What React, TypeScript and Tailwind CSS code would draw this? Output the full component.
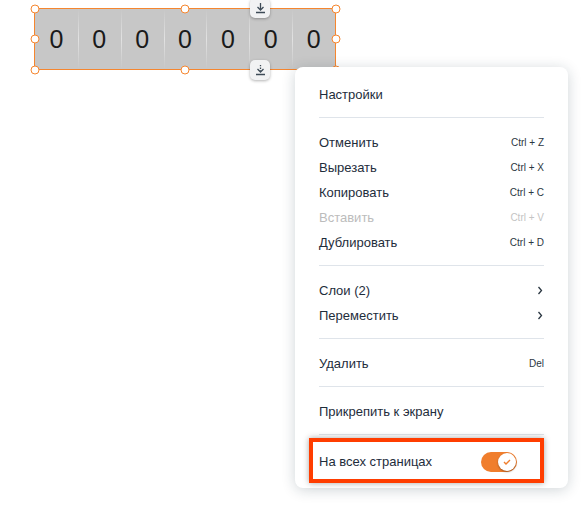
import type { ReactNode } from 'react';

type Item = {
  label: string;
  shortcut?: string;
  disabled?: boolean;
  submenu?: boolean;
};

const SECTIONS: Item[][] = [
  [{ label: 'Настройки' }],
  [
    { label: 'Отменить', shortcut: 'Ctrl + Z' },
    { label: 'Вырезать', shortcut: 'Ctrl + X' },
    { label: 'Копировать', shortcut: 'Ctrl + C' },
    { label: 'Вставить', shortcut: 'Ctrl + V', disabled: true },
    { label: 'Дублировать', shortcut: 'Ctrl + D' },
  ],
  [
    { label: 'Слои (2)', submenu: true },
    { label: 'Переместить', submenu: true },
  ],
  [{ label: 'Удалить', shortcut: 'Del' }],
  [{ label: 'Прикрепить к экрану' }],
];

// handle centers on the selection frame (page coords)
const HANDLES: [number, number][] = [
  [34, 8],
  [184, 8],
  [335, 8],
  [34, 38],
  [335, 38],
  [34, 69],
  [184, 69],
  [335, 69],
];

export default function App() {
  return (
    <div
      className="relative h-[508px] w-[581px] overflow-hidden bg-white"
      style={{ fontFamily: '"Liberation Sans", Arial, sans-serif' }}
    >
      <Counter />
      {HANDLES.map(([x, y], i) => (
        <span
          key={i}
          className="absolute h-[9px] w-[9px] -translate-x-1/2 -translate-y-1/2 rounded-full border border-[#f5862f] bg-white"
          style={{ left: x + 0.5, top: y + 0.5 }}
        />
      ))}
      <DownloadButton top={-2} dashed={false} />
      <DownloadButton top={60} dashed />
      <ContextMenu />
    </div>
  );
}

function Counter() {
  return (
    <div className="absolute left-[34px] top-[8px] flex h-[62px] w-[302px] border border-[#f5862f] bg-[#c7c7c7]">
      {Array.from({ length: 7 }).map((_, i) => (
        <div key={i} className="relative flex flex-1 items-center justify-center">
          {i > 0 && (
            <span className="absolute inset-y-0 left-0 w-px bg-gradient-to-b from-[#c7c7c7] via-[#e2e2e2] to-[#c7c7c7]" />
          )}
          <span className="text-[25px] leading-none text-[#1a1a1a]">0</span>
        </div>
      ))}
    </div>
  );
}

function DownloadButton({ top, dashed }: { top: number; dashed: boolean }) {
  return (
    <div
      className="absolute left-[250px] flex h-[20px] w-[20px] items-center justify-center rounded-[5px] bg-[#f1f2f3] shadow-[0_1px_3px_rgba(0,0,0,0.3)]"
      style={{ top }}
    >
      <svg width="11" height="12" viewBox="0 0 11 12" fill="none" stroke="#3d4b57" strokeWidth="1.3">
        <path d="M5.5 1v6.5" strokeDasharray={dashed ? '1.3 1.3' : undefined} />
        <path d="M2.5 5l3 3 3-3" />
        <path d="M1 10.5h9" strokeWidth="1.5" />
      </svg>
    </div>
  );
}

function ContextMenu() {
  return (
    <div className="absolute left-[295px] top-[67px] w-[273px] rounded-lg bg-white pb-px pt-[3px] shadow-[0_2px_14px_rgba(22,45,61,0.2)]">
      {SECTIONS.map((items, i) => (
        <Section key={i} first={i === 0}>
          {items.map((item) => (
            <Row key={item.label} item={item} />
          ))}
        </Section>
      ))}
      <Section>
        <div className="flex h-[30px] items-center text-[13px] text-[#1e2d3b]">
          <span>На всех страницах</span>
          <Toggle />
        </div>
        <div className="pointer-events-none absolute -left-[10px] right-0 top-[3px] h-[45px] border-4 border-[#ff3d00] shadow-[0_0_6px_rgba(0,0,0,0.35)]" />
      </Section>
    </div>
  );
}

function Section({ first, children }: { first?: boolean; children: ReactNode }) {
  return (
    <div className={first ? 'relative mx-6 pb-[10px] pt-3' : 'relative mx-6 border-t border-[#dfe4ea] pb-[10px] pt-3'}>
      {children}
    </div>
  );
}

function Row({ item }: { item: Item }) {
  return (
    <div
      className={
        item.disabled
          ? 'flex h-[25px] items-center justify-between text-[13px] text-[#bcbcbc]'
          : 'flex h-[25px] items-center justify-between text-[13px] text-[#1e2d3b]'
      }
    >
      <span>{item.label}</span>
      {item.shortcut && (
        <span className={item.disabled ? 'text-[10px] text-[#c4c4c4]' : 'text-[10px] text-[#2b3742]'}>
          {item.shortcut}
        </span>
      )}
      {item.submenu && (
        <svg width="6" height="9" viewBox="0 0 6 9" fill="none" stroke="#2b3742" strokeWidth="1.3" className="mr-px">
          <path d="M1.5 1l3 3.5-3 3.5" />
        </svg>
      )}
    </div>
  );
}

function Toggle() {
  return (
    <div className="ml-auto mr-[27px] flex h-[20px] w-[36px] items-center justify-end rounded-full bg-[#f07e2d] pr-px">
      <div className="flex h-[18px] w-[18px] items-center justify-center rounded-full bg-white shadow-[0_1px_2px_rgba(0,0,0,0.35)]">
        <svg width="8" height="6" viewBox="0 0 8 6" fill="none" stroke="#f07e2d" strokeWidth="1.4">
          <path d="M1 3l2 2 4-4" />
        </svg>
      </div>
    </div>
  );
}
